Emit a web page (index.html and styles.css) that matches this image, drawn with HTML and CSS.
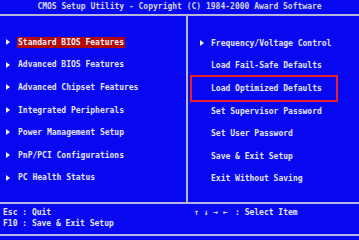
FILE: index.html
```html
<!DOCTYPE html>
<html lang="en">
<head>
  <meta charset="UTF-8">
  <title>CMOS Setup Utility</title>
  <link rel="stylesheet" href="styles.css">
</head>
<body>
  <div class="screen">
    <div class="title">CMOS Setup Utility - Copyright (C) 1984-2000 Award Software</div>

    <div class="menu">
      <ul class="col left">
        <li class="sub"><span class="sel">Standard BIOS Features</span></li>
        <li class="sub"><span>Advanced BIOS Features</span></li>
        <li class="sub"><span>Advanced Chipset Features</span></li>
        <li class="sub"><span>Integrated Peripherals</span></li>
        <li class="sub"><span>Power Management Setup</span></li>
        <li class="sub"><span>PnP/PCI Configurations</span></li>
        <li class="sub"><span>PC Health Status</span></li>
      </ul>
      <ul class="col right">
        <li class="sub"><span>Frequency/Voltage Control</span></li>
        <li><span>Load Fail-Safe Defaults</span></li>
        <li class="marked"><span>Load Optimized Defaults</span></li>
        <li><span>Set Supervisor Password</span></li>
        <li><span>Set User Password</span></li>
        <li><span>Save &amp; Exit Setup</span></li>
        <li><span>Exit Without Saving</span></li>
      </ul>
    </div>

    <div class="help">
      <div class="keys">
        <div>Esc : Quit</div>
        <div>F10 : Save &amp; Exit Setup</div>
      </div>
      <div class="keys nav">
        <div><span class="arrows">↑ ↓ → ←</span>: Select Item</div>
      </div>
    </div>
  </div>
</body>
</html>
```

FILE: styles.css
```css
body {
  margin: 0;
  background: #0808f0;
}
.screen {
  width: 359px;
  height: 240px;
  background: #0808f0;
  color: #e4e4f6;
  font-family: "DejaVu Sans Mono", "Liberation Mono", monospace;
  font-weight: bold;
  font-size: 8px;
  overflow: hidden;
}
.title {
  height: 14px;
  line-height: 14px;
  text-align: center;
  color: #d4d4ea;
  border-bottom: 2px solid #b4b4dc;
}
.menu {
  display: grid;
  grid-template-columns: 186px 2px 1fr;
  height: 186px;
  border-bottom: 2px solid #b4b4dc;
}
.menu::before {
  content: "";
  grid-column: 2;
  grid-row: 1;
  background: #b4b4dc;
}
.col {
  list-style: none;
  margin: 0;
  grid-row: 1;
}
.left {
  grid-column: 1;
  padding: 15px 0 0 17px;
}
.right {
  grid-column: 3;
  padding: 16px 0 0 22px;
}
.col li {
  height: 22.6px;
  display: flex;
  align-items: center;
  position: relative;
}
.col li span {
  line-height: 11px;
  padding: 0 1px;
}
.sub::before {
  content: "";
  position: absolute;
  left: -11px;
  top: 8px;
  border-left: 4px solid #f0f0ff;
  border-top: 3px solid transparent;
  border-bottom: 3px solid transparent;
}
.right .sub::before {
  left: -10px;
}
.sel {
  background: #b0060c;
  color: #f4f4f4;
}
.marked::after {
  content: "";
  position: absolute;
  left: -20px;
  right: 21px;
  top: -2px;
  bottom: -2px;
  border: 2px solid #e8202a;
}
.help {
  display: grid;
  grid-template-columns: 188px 1fr;
  height: 30px;
  border-bottom: 2px solid #b4b4dc;
}
.keys {
  padding: 3px 0 0 3px;
  line-height: 11px;
}
.nav {
  padding-left: 6px;
}
.arrows {
  display: inline-block;
  width: 41px;
}
```
